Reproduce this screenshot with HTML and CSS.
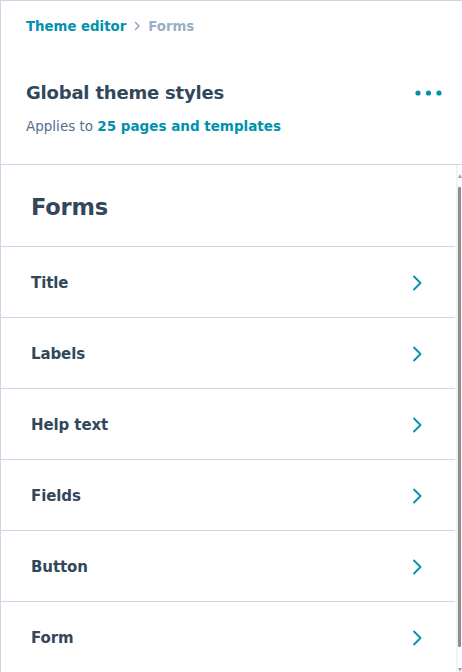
FILE: index.html
```html
<!DOCTYPE html>
<html lang="en">
<head>
<meta charset="utf-8">
<title>Theme editor - Forms</title>
<link rel="stylesheet" href="styles.css">
</head>
<body>
<div class="panel">
  <header class="header">
    <nav class="crumbs">
      <a class="crumb-link" href="#">Theme editor</a>
      <svg class="crumb-sep" width="6" height="10" viewBox="0 0 6 10"><path d="M1.5 1.5l3.5 3.5-3.5 3.5" fill="none" stroke="#7c98b6" stroke-width="1.1" stroke-linecap="round" stroke-linejoin="round"/></svg>
      <span class="crumb-current">Forms</span>
    </nav>
    <div class="title-row">
      <h1 class="title">Global theme styles</h1>
      <button class="more" aria-label="More">
        <svg width="27" height="6" viewBox="0 0 27 6"><circle cx="3" cy="3" r="2.6" fill="#0091ae"/><circle cx="13.5" cy="3" r="2.6" fill="#0091ae"/><circle cx="24" cy="3" r="2.6" fill="#0091ae"/></svg>
      </button>
    </div>
    <p class="sub">Applies to <a class="sub-link" href="#">25 pages and templates</a></p>
  </header>
  <div class="scroll">
    <div class="scroll-content">
      <h2 class="section-title">Forms</h2>
      <ul class="list">
        <li class="row"><span class="row-label">Title</span><svg class="chev" width="10" height="16" viewBox="0 0 10 16"><path d="M2 1.5l6.5 6.5L2 14.5" fill="none" stroke="#0091ae" stroke-width="1.8" stroke-linecap="round" stroke-linejoin="round"/></svg></li>
        <li class="row"><span class="row-label">Labels</span><svg class="chev" width="10" height="16" viewBox="0 0 10 16"><path d="M2 1.5l6.5 6.5L2 14.5" fill="none" stroke="#0091ae" stroke-width="1.8" stroke-linecap="round" stroke-linejoin="round"/></svg></li>
        <li class="row"><span class="row-label">Help text</span><svg class="chev" width="10" height="16" viewBox="0 0 10 16"><path d="M2 1.5l6.5 6.5L2 14.5" fill="none" stroke="#0091ae" stroke-width="1.8" stroke-linecap="round" stroke-linejoin="round"/></svg></li>
        <li class="row"><span class="row-label">Fields</span><svg class="chev" width="10" height="16" viewBox="0 0 10 16"><path d="M2 1.5l6.5 6.5L2 14.5" fill="none" stroke="#0091ae" stroke-width="1.8" stroke-linecap="round" stroke-linejoin="round"/></svg></li>
        <li class="row"><span class="row-label">Button</span><svg class="chev" width="10" height="16" viewBox="0 0 10 16"><path d="M2 1.5l6.5 6.5L2 14.5" fill="none" stroke="#0091ae" stroke-width="1.8" stroke-linecap="round" stroke-linejoin="round"/></svg></li>
        <li class="row"><span class="row-label">Form</span><svg class="chev" width="10" height="16" viewBox="0 0 10 16"><path d="M2 1.5l6.5 6.5L2 14.5" fill="none" stroke="#0091ae" stroke-width="1.8" stroke-linecap="round" stroke-linejoin="round"/></svg></li>
      </ul>
    </div>
    <div class="scrollbar" aria-hidden="true">
      <span class="sb-up"></span>
      <span class="sb-thumb"></span>
      <span class="sb-down"></span>
    </div>
  </div>
</div>
</body>
</html>
```

FILE: styles.css
```css
* { box-sizing: border-box; }
html, body { margin: 0; padding: 0; background: #fff; }
body {
  font-family: "DejaVu Sans", "Liberation Sans", sans-serif;
  color: #33475b;
}
.panel {
  width: 462px;
  height: 672px;
  border-left: 1px solid #cbd6e2;
  border-top: 1px solid #cbd6e2;
  display: flex;
  flex-direction: column;
  overflow: hidden;
}
.header {
  flex: none;
  padding: 15px 20px 28px 25px;
  border-bottom: 1px solid #cbd6e2;
}
.crumbs {
  display: flex;
  align-items: center;
  gap: 8px;
  height: 20px;
  font-size: 13.3px;
  font-weight: bold;
  letter-spacing: 0;
}
.crumb-link { color: #0091ae; text-decoration: none; }
.crumb-sep { display: block; }
.crumb-current { color: #99afc4; }
.title-row {
  display: flex;
  align-items: center;
  justify-content: space-between;
  margin-top: 45px;
  height: 24px;
}
.title {
  margin: 0;
  font-size: 18px;
  line-height: 24px;
  font-weight: bold;
  letter-spacing: -0.2px;
}
.more {
  border: 0;
  background: none;
  padding: 0;
  display: flex;
}
.sub {
  margin: 11px 0 0;
  font-size: 13.5px;
  line-height: 20px;
  color: #516f90;
  letter-spacing: 0;
}
.sub-link { color: #0091ae; font-weight: bold; text-decoration: none; }
.scroll {
  flex: 1;
  min-height: 0;
  display: flex;
}
.scroll-content {
  flex: 1;
  min-width: 0;
  overflow: hidden;
}
.scrollbar {
  flex: none;
  width: 7px;
  display: flex;
  flex-direction: column;
  align-items: flex-end;
  padding: 9px 0 0 0;
  background: linear-gradient(to right, #fff 0 1px, #f2f2f2 1px 3px, #fff 3px);
}
.sb-up {
  width: 0;
  height: 0;
  border-left: 2px solid transparent;
  border-right: 2px solid transparent;
  border-bottom: 4px solid #a0a0a0;
}
.sb-thumb {
  flex: 1;
  width: 3px;
  margin: 9px 1px 21px 0;
  background: #8d8d8d;
  border-radius: 1px;
}
.sb-down {
  width: 0;
  height: 0;
  border-left: 2px solid transparent;
  border-right: 2px solid transparent;
  border-top: 4px solid #a0a0a0;
}
.section-title {
  margin: 0;
  padding: 27px 30px 24px;
  font-size: 22.5px;
  line-height: 30px;
  font-weight: bold;
  letter-spacing: -0.2px;
  border-bottom: 1px solid #cbd6e2;
}
.list {
  list-style: none;
  margin: 0;
  padding: 0;
}
.row {
  display: flex;
  align-items: center;
  justify-content: space-between;
  height: 71px;
  padding: 1px 33px 0 30px;
  border-bottom: 1px solid #cbd6e2;
}
.row-label {
  font-size: 15px;
  font-weight: bold;
  letter-spacing: -0.1px;
}
.chev { display: block; }
```
